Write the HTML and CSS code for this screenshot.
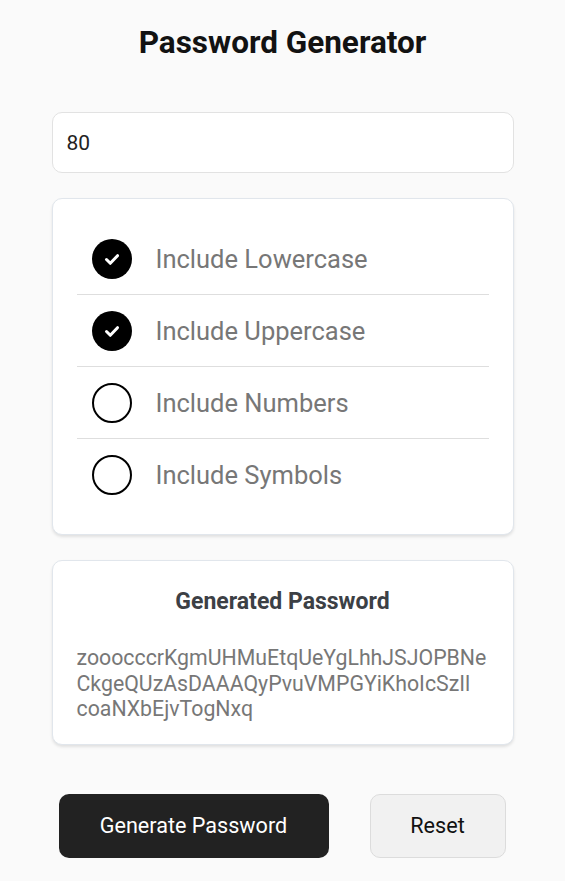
FILE: index.html
```html
<!DOCTYPE html>
<html>
<head>
<meta charset="utf-8">
<link rel="stylesheet" href="styles.css">
</head>
<body>
<main class="app">
  <h1 class="title">Password Generator</h1>
  <div class="length-input">80</div>
  <section class="card options">
    <div class="option">
      <span class="check on"><svg viewBox="0 0 40 40" width="40" height="40"><path d="M14.5 20.5l3.8 3.8 7.2-7.6" fill="none" stroke="#fff" stroke-width="3" stroke-linecap="round" stroke-linejoin="round"/></svg></span>
      <span class="label">Include Lowercase</span>
    </div>
    <div class="option">
      <span class="check on"><svg viewBox="0 0 40 40" width="40" height="40"><path d="M14.5 20.5l3.8 3.8 7.2-7.6" fill="none" stroke="#fff" stroke-width="3" stroke-linecap="round" stroke-linejoin="round"/></svg></span>
      <span class="label">Include Uppercase</span>
    </div>
    <div class="option">
      <span class="check"></span>
      <span class="label">Include Numbers</span>
    </div>
    <div class="option">
      <span class="check"></span>
      <span class="label">Include Symbols</span>
    </div>
  </section>
  <section class="card result">
    <h2 class="result-title">Generated Password</h2>
    <p class="password">zooocccrKgmUHMuEtqUeYgLhhJSJOPBNe<br>CkgeQUzAsDAAAQyPvuVMPGYiKhoIcSzIl<br>coaNXbEjvTogNxq</p>
  </section>
  <div class="actions">
    <button class="btn primary">Generate Password</button>
    <button class="btn secondary">Reset</button>
  </div>
</main>
</body>
</html>
```
FILE: styles.css
```css
* { box-sizing: border-box; }
html, body { margin: 0; padding: 0; }
body {
  background: #fafafa;
  font-family: Roboto, "Noto Sans", sans-serif;
  color: #111;
}
.app {
  width: 462px;
  margin: 0 auto;
  padding-top: 24px;
}
.title {
  margin: 0;
  text-align: center;
  font-size: 31.5px;
  font-weight: 700;
  line-height: 38px;
  color: #121212;
}
.length-input {
  margin-top: 50px;
  height: 61px;
  background: #fff;
  border: 1px solid #e2e2e2;
  border-radius: 10px;
  padding: 0 14px;
  display: flex;
  align-items: center;
  font-size: 21px;
  color: #222;
}
.card {
  background: #fff;
  border: 1px solid #e1e6ec;
  border-radius: 10px;
  box-shadow: 0 2px 3px rgba(0,0,0,0.10);
}
.options {
  margin-top: 25px;
  padding: 24px 24px 23px;
}
.option {
  height: 72px;
  display: flex;
  align-items: center;
  padding-left: 15px;
  border-bottom: 1px solid #dedede;
}
.option:last-child { border-bottom: none; }
.check {
  width: 40px;
  height: 40px;
  border-radius: 50%;
  border: 2px solid #000;
  flex: none;
  display: flex;
  align-items: center;
  justify-content: center;
}
.check.on { background: #000; border: none; }
.label {
  margin-left: 24px;
  font-size: 25.5px;
  color: #777;
}
.result {
  margin-top: 25px;
  padding: 27px 24px 22px;
}
.result-title {
  margin: 0;
  text-align: center;
  font-size: 23px;
  font-weight: 700;
  line-height: 28px;
  color: #3c4045;
}
.password {
  margin: 29px 0 0;
  font-size: 21.3px;
  line-height: 25.5px;
  color: #777;
}
.actions {
  margin-top: 49px;
  display: flex;
  justify-content: space-between;
  padding: 0 8px 0 7px;
}
.btn {
  height: 64px;
  border-radius: 10px;
  font-family: Roboto, "Noto Sans", sans-serif;
  font-size: 21.6px;
}
.primary {
  width: 270px;
  background: #222;
  color: #fff;
  border: none;
}
.secondary {
  width: 136px;
  background: #f1f1f1;
  color: #111;
  border: 1px solid #dcdcdc;
}
```
